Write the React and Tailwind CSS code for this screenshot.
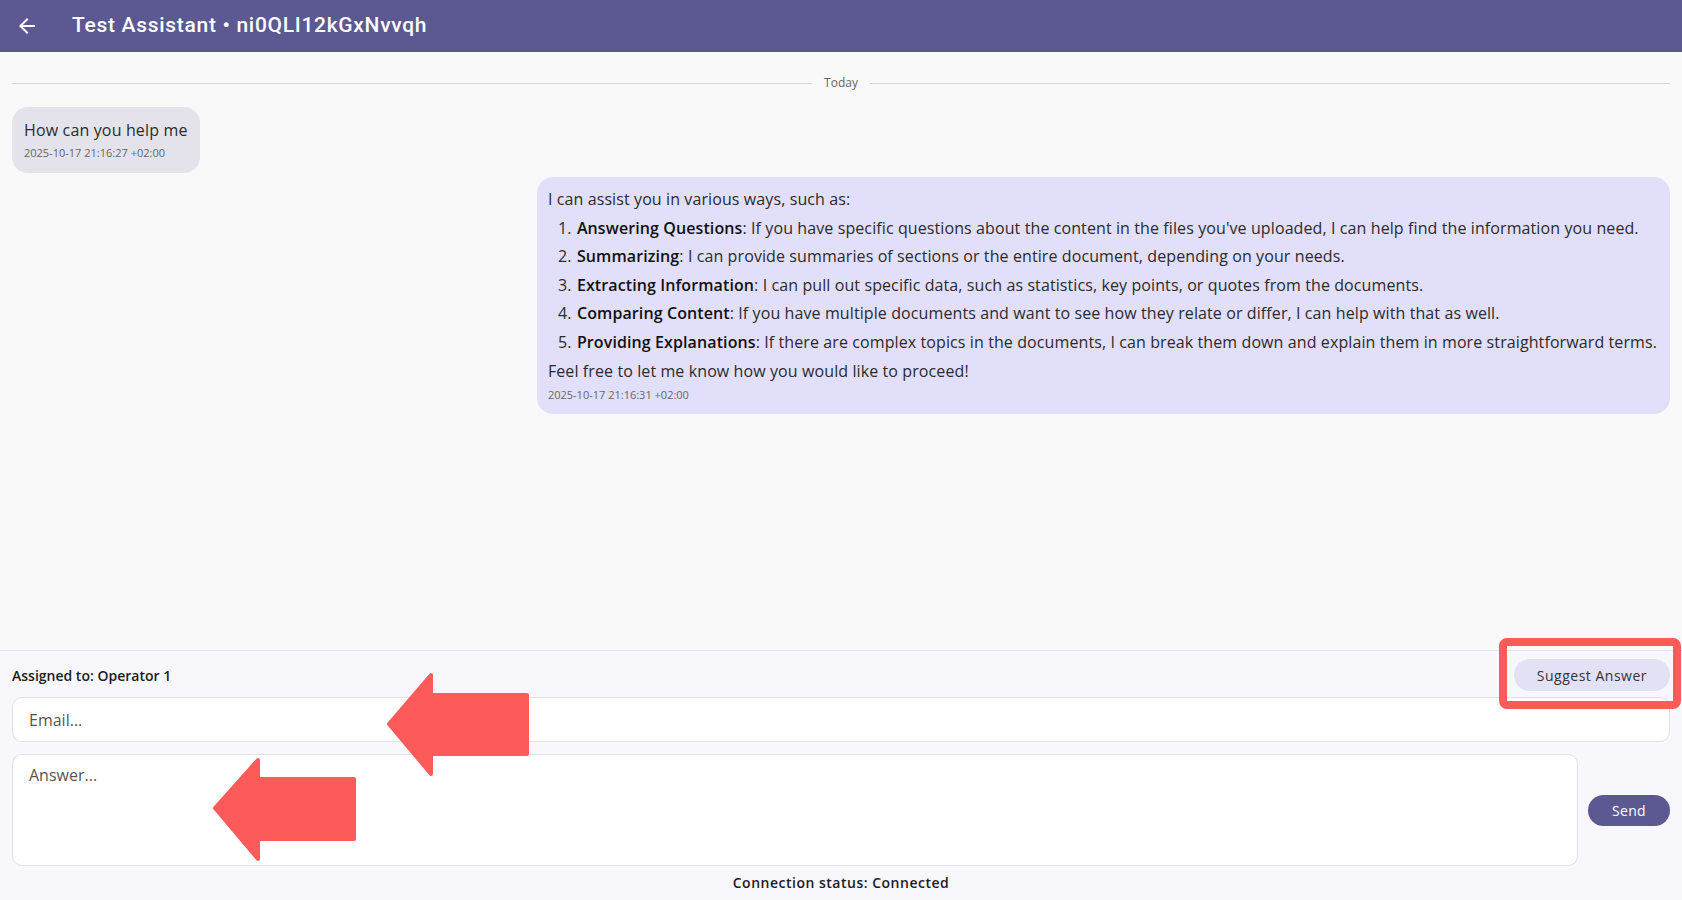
import React from "react";

const items = [
  ["Answering Questions", "If you have specific questions about the content in the files you've uploaded, I can help find the information you need."],
  ["Summarizing", "I can provide summaries of sections or the entire document, depending on your needs."],
  ["Extracting Information", "I can pull out specific data, such as statistics, key points, or quotes from the documents."],
  ["Comparing Content", "If you have multiple documents and want to see how they relate or differ, I can help with that as well."],
  ["Providing Explanations", "If there are complex topics in the documents, I can break them down and explain them in more straightforward terms."],
];

export default function App() {
  return (
    <div className="relative h-[900px] w-full overflow-hidden flex flex-col bg-[#f9f9f9] font-['Open_Sans',sans-serif] text-[#2b2b2b]">
      {/* Header */}
      <header className="h-[52px] shrink-0 bg-[#5c5891] flex items-center">
        <button className="ml-[15px] w-6 h-6 flex items-center justify-center text-white">
          <svg viewBox="0 0 24 24" width="24" height="24" fill="currentColor">
            <path d="M20 11H7.83l5.59-5.59L12 4l-8 8 8 8 1.41-1.41L7.83 13H20v-2z" />
          </svg>
        </button>
        <h1 className="ml-[33px] text-white font-['Roboto',sans-serif] text-[21px] font-medium tracking-[0.7px]">
          Test Assistant • ni0QLI12kGxNvvqh
        </h1>
      </header>

      {/* Chat area */}
      <main className="flex-1 min-h-0 px-3 pt-[23px]">
        <div className="flex items-center gap-2 h-4">
          <div className="flex-1 h-px bg-[#d6d6d9]" />
          <span className="text-[12px] leading-4 text-[#666] px-1">Today</span>
          <div className="flex-1 h-px bg-[#d6d6d9]" />
        </div>

        <div className="mt-[16px] w-fit rounded-[16px] bg-[#e4e3ec] px-3 pt-3 pb-3">
          <p className="text-[16px] leading-[22px] tracking-[0.15px]">How can you help me</p>
          <p className="mt-1 text-[11px] leading-4 text-[#666]">2025-10-17 21:16:27 +02:00</p>
        </div>

        <div className="mt-1 ml-auto w-fit rounded-[16px] bg-[#e2dffb] pl-[11px] pr-[13px] pt-2 pb-[11px] text-[16px] leading-[28.6px] tracking-[0.1px]">
          <p>I can assist you in various ways, such as:</p>
          <ol className="list-decimal pl-[28px]">
            {items.map(([b, t]) => (
              <li key={b} className="pl-[1px]">
                <span className="font-semibold text-[#111]">{b}</span>: {t}
              </li>
            ))}
          </ol>
          <p>Feel free to let me know how you would like to proceed!</p>
          <p className="mt-[2px] text-[11px] leading-4 tracking-normal text-[#666]">2025-10-17 21:16:31 +02:00</p>
        </div>
      </main>

      {/* Bottom panel */}
      <section className="shrink-0 h-[250px] border-t border-[#e6e5ec] bg-[#f8f7fc] px-3 pt-[8px]">
        <div className="flex items-center justify-between h-8">
          <span className="text-[14px] font-semibold text-[#1c1c1c]">Assigned to: Operator 1</span>
          <button className="h-8 px-[23px] rounded-full bg-[#e3e1f6] text-[14px] tracking-[0.5px] text-[#333]">Suggest Answer</button>
        </div>
        <input
          className="mt-[6px] block w-full h-[45px] rounded-[10px] border border-[#e2e2e6] bg-white px-4 text-[16px] placeholder:text-[#555] outline-none"
          placeholder="Email..."
        />
        <div className="mt-[12px] flex items-center gap-[10px]">
          <textarea
            className="flex-1 h-[112px] resize-none rounded-[10px] border border-[#e2e2e6] bg-white px-4 pt-[9px] text-[16px] leading-[22px] placeholder:text-[#555] outline-none"
            placeholder="Answer..."
          />
          <button className="w-[82px] h-[31px] rounded-full bg-[#5c5891] text-white text-[14px] tracking-[0.3px]">Send</button>
        </div>
        <p className="mt-[7px] text-center text-[14px] leading-5 font-semibold tracking-[0.5px] text-[#1c1c1c]">Connection status: Connected</p>
      </section>

      {/* Annotation overlay */}
      <svg className="absolute inset-0 pointer-events-none" width="1682" height="900" viewBox="0 0 1682 900">
        <polygon
          points="389,724 431,675 431,695 527,695 527,754 431,754 431,774"
          fill="#fd5a5a"
          stroke="#fd5a5a"
          strokeWidth="4"
          strokeLinejoin="round"
        />
        <polygon
          points="215,808 258,760 258,779 354,779 354,839 258,839 258,859"
          fill="#fd5a5a"
          stroke="#fd5a5a"
          strokeWidth="4"
          strokeLinejoin="round"
        />
        <rect x="1503" y="642" width="174" height="63" rx="4" fill="none" stroke="#fd5a5a" strokeWidth="8" />
      </svg>
    </div>
  );
}
